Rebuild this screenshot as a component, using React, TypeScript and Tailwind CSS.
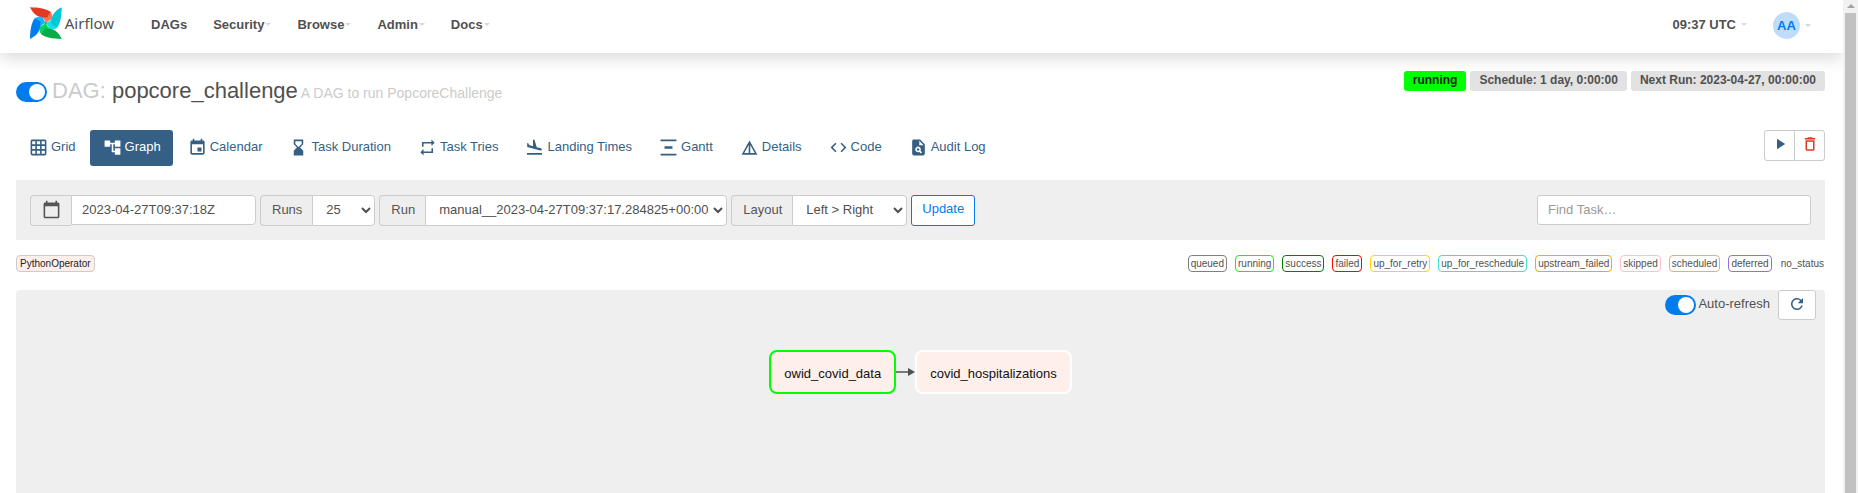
import type { ReactNode } from "react";
import type { IconType } from "react-icons";
import {
  MdAccountTree,
  MdCode,
  MdDeleteOutline,
  MdDetails,
  MdEvent,
  MdFlightLand,
  MdGridOn,
  MdHourglassBottom,
  MdPlagiarism,
  MdPlayArrow,
  MdRefresh,
  MdRepeat,
  MdVerticalDistribute,
} from "react-icons/md";

const menus = ["Security", "Browse", "Admin", "Docs"];

const tabs: { label: string; icon: IconType; active?: boolean }[] = [
  { label: "Grid", icon: MdGridOn },
  { label: "Graph", icon: MdAccountTree, active: true },
  { label: "Calendar", icon: MdEvent },
  { label: "Task Duration", icon: MdHourglassBottom },
  { label: "Task Tries", icon: MdRepeat },
  { label: "Landing Times", icon: MdFlightLand },
  { label: "Gantt", icon: MdVerticalDistribute },
  { label: "Details", icon: MdDetails },
  { label: "Code", icon: MdCode },
  { label: "Audit Log", icon: MdPlagiarism },
];

const states = [
  { name: "queued", style: "border px-[2px] border-[#808080]" },
  { name: "running", style: "border px-[2px] border-[#00ff00]" },
  { name: "success", style: "border px-[2px] border-[#008000]" },
  { name: "failed", style: "border px-[2px] border-[#ff0000]" },
  { name: "up_for_retry", style: "border px-[2px] border-[#ffd700]" },
  { name: "up_for_reschedule", style: "border px-[2px] border-[#40e0d0]" },
  { name: "upstream_failed", style: "border px-[2px] border-[#ffa500]" },
  { name: "skipped", style: "border px-[2px] border-[#ffc0cb]" },
  { name: "scheduled", style: "border px-[2px] border-[#d2b48c]" },
  { name: "deferred", style: "border px-[2px] border-[#9370db]" },
  { name: "no_status", style: "border border-transparent" },
];

const blades = [
  { angle: 0, dark: "#e43921", light: "#ff7557" },
  { angle: 90, dark: "#00c7d4", light: "#11e1ee" },
  { angle: 180, dark: "#00ad46", light: "#04d659" },
  { angle: 270, dark: "#017cee", light: "#0cb6ff" },
];

function Pinwheel() {
  return (
    <svg viewBox="0 0 32 32" className="size-8" aria-hidden="true">
      {blades.map((b) => (
        <g key={b.angle} transform={`rotate(${b.angle} 16 16)`}>
          <path d="M10 9 L20 4 C22.500 6.500 23.200 10 22.300 12 C20.500 13 18 14.500 16 16 C15 13 13.500 11 10 9 Z" fill={b.light} />
          <path d="M0 0 C9 0.200 17.500 1.500 20.500 5 C19.500 7 18.500 8 17.800 10.300 C9.500 11 4 8.500 0 0 Z" fill={b.dark} />
        </g>
      ))}
      <circle cx="16" cy="16" r="0.8" fill="#51504f" />
    </svg>
  );
}

function CalendarIcon() {
  return (
    <svg viewBox="0 0 24 24" className="size-[19px]" fill="currentColor" role="img" aria-label="Base date">
      <path d="M20 3h-1V1h-2v2H7V1H5v2H4c-1.100 0-2 .9-2 2v16c0 1.100.9 2 2 2h16c1.100 0 2-.9 2-2V5c0-1.100-.9-2-2-2zm0 18H4V8h16v13z" />
    </svg>
  );
}

function Caret() {
  return <span className="border-x-3 border-t-3 border-x-transparent border-t-[#e2d2e2]" />;
}

function Toggle({ label }: { label: string }) {
  return (
    <span className="relative inline-flex h-5 w-[31px] shrink-0">
      <input
        type="checkbox"
        role="switch"
        aria-label={label}
        defaultChecked
        className="peer h-5 w-[31px] cursor-pointer appearance-none rounded-full bg-[#9e9e9e] checked:bg-[#017cee]"
      />
      <span className="pointer-events-none absolute top-0.5 left-0.5 size-4 rounded-full bg-white peer-checked:left-[13px]" />
    </span>
  );
}

function Group({ id, label, children }: { id: string; label: ReactNode; children: ReactNode }) {
  return (
    <div className="flex h-[31px]">
      <label
        htmlFor={id}
        className="flex items-center rounded-l border border-r-0 border-[#cccccc] bg-[#eeeeee] pr-2.5 pb-0.5 pl-[11px] text-[#555]"
      >
        {label}
      </label>
      {children}
    </div>
  );
}

const selectStyle = "h-[31px] rounded-r border border-[#cccccc] bg-white pb-0.5 pl-[9px] text-[13px] text-[#51504f]";

export default function App() {
  return (
    <div className="flex min-h-screen bg-white font-['Liberation_Sans',Arial,sans-serif] text-[13px] leading-5 text-[#51504f]">
      <div className="flex min-w-0 flex-1 flex-col">
        <header className="flex h-[53px] items-center pr-8 pl-[30px] font-bold shadow-[0_5px_15px_rgba(0,0,0,0.15)]">
          <a href="#" aria-label="Airflow" className="mr-6 flex w-[84px] items-center gap-[3px] pb-[7px]">
            <Pinwheel />
            <span className="font-['Noto_Sans',sans-serif] text-[15px] font-normal">Airflow</span>
          </a>
          <nav className="flex flex-1 items-center pb-1">
            <a href="#" className="px-[13px]">
              DAGs
            </a>
            {menus.map((m) => (
              <button key={m} type="button" className="flex items-center gap-px px-[13px]">
                {m}
                <Caret />
              </button>
            ))}
          </nav>
          <button type="button" className="mr-[26px] flex items-center gap-[5px] pb-1">
            09:37 UTC
            <Caret />
          </button>
          <button type="button" className="flex items-center gap-[5px] pb-0.5">
            <span className="flex size-[27px] items-center justify-center rounded-full bg-[#bfddfb] text-[#017cee]">
              AA
            </span>
            <Caret />
          </button>
        </header>

        <main className="flex flex-1 flex-col px-4 pr-[18px] pt-[18px]">
          <div className="flex items-start justify-between">
            <div className="flex items-center gap-[5px] pt-1">
              <Toggle label="Pause or unpause DAG" />
              <h3 className="flex items-baseline gap-[3px] pb-0.5 text-[22px] leading-8">
                <span>
                  <span className="text-[#cbcbcb]">DAG:</span> popcore_challenge
                </span>
                <small className="text-sm text-[#cbcbcb]">A DAG to run PopcoreChallenge</small>
              </h3>
            </div>
            <div className="flex gap-1 text-xs leading-[18px] font-bold">
              <a href="#" className="rounded-[3px] bg-[#00ff00] px-[9px] pb-0.5 text-[#222]">
                running
              </a>
              <a href="#" className="rounded-[3px] bg-[#e2e2e2] px-[9px] pb-0.5">
                Schedule: 1 day, 0:00:00
              </a>
              <span className="rounded-[3px] bg-[#e2e2e2] px-[9px] pb-0.5">Next Run: 2023-04-27, 00:00:00</span>
            </div>
          </div>

          <div className="mt-[21px] flex items-start justify-between">
            <nav className="flex gap-0.5">
              {tabs.map(({ label, icon: Icon, active }) => (
                <a
                  key={label}
                  href="#"
                  className={
                    active
                      ? "flex h-9 items-center gap-[3px] rounded-[3px] bg-[#355f84] pr-3 pb-0.5 pl-[13px] text-white"
                      : "flex h-9 items-center gap-[3px] rounded-[3px] pr-3 pb-0.5 pl-[13px] text-[#355f84]"
                  }
                >
                  <Icon className="size-[19px]" />
                  {label}
                </a>
              ))}
            </nav>
            <div className="flex">
              <button
                type="button"
                aria-label="Trigger DAG"
                className="flex h-[31px] w-[31px] items-center justify-center rounded-l-[3px] border border-[#cccccc] pb-1 text-[#355f84]"
              >
                <MdPlayArrow className="size-[18px]" />
              </button>
              <button
                type="button"
                aria-label="Delete DAG"
                className="-ml-px flex h-[31px] w-[31px] items-center justify-center rounded-r-[3px] border border-[#cccccc] pb-1 text-[#e43921]"
              >
                <MdDeleteOutline className="size-[18px]" />
              </button>
            </div>
          </div>

          <form className="mt-3.5 flex h-[60px] items-start justify-between bg-[#efefef] px-3.5 pt-[15px]">
            <div className="flex gap-1">
              <Group id="base-date" label={<CalendarIcon />}>
                <input
                  id="base-date"
                  type="text"
                  defaultValue="2023-04-27T09:37:18Z"
                  className="h-[30px] w-[185px] rounded-r border border-[#cccccc] bg-white px-2.5 pb-0.5"
                />
              </Group>
              <Group id="num-runs" label="Runs">
                <select id="num-runs" className={`${selectStyle} w-[63px]`}>
                  <option>25</option>
                </select>
              </Group>
              <Group id="run" label="Run">
                <select id="run" className={`${selectStyle} w-[302px]`}>
                  <option>manual__2023-04-27T09:37:17.284825+00:00</option>
                </select>
              </Group>
              <Group id="layout" label="Layout">
                <select id="layout" className={`${selectStyle} w-[115px]`}>
                  <option>Left &gt; Right</option>
                </select>
              </Group>
              <button
                type="button"
                className="h-[31px] rounded-[3px] border border-[#017cee] bg-white px-2.5 pb-1 text-[#017cee]"
              >
                Update
              </button>
            </div>
            <input
              type="text"
              aria-label="Find Task"
              placeholder="Find Task…"
              className="h-[30px] w-[274px] rounded-[3px] border border-[#cccccc] bg-white px-2.5 pb-0.5 placeholder:text-[#999]"
            />
          </form>

          <div className="mt-[15px] flex justify-between text-[10px] leading-[15px]">
            <span className="rounded border border-[#cccccc] bg-[#ffefeb] px-[3px] text-[#222]">PythonOperator</span>
            <div className="flex gap-2">
              {states.map((s) => (
                <span key={s.name} className={`rounded ${s.style}`}>
                  {s.name}
                </span>
              ))}
            </div>
          </div>

          <section className="mt-[18px] flex flex-1 flex-col rounded-t bg-[#efefef]">
            <div className="flex items-start justify-end pr-[9px]">
              <label className="flex items-start gap-0.5 pt-[5px]">
                <Toggle label="Auto-refresh" />
                <span className="-mt-px">Auto-refresh</span>
              </label>
              <button
                type="button"
                aria-label="Refresh"
                className="ml-2 flex h-[30px] w-[38px] items-center justify-center rounded-[3px] border border-[#cccccc] bg-white pb-0.5 text-[#355f84]"
              >
                <MdRefresh className="size-[18px]" />
              </button>
            </div>
            <div className="flex items-center justify-center pt-[30px] text-[#111]">
              <div className="flex h-11 items-center rounded-lg border-2 border-[#00ff00] bg-[#ffefeb] px-[13px] pt-[3px]">
                owid_covid_data
              </div>
              <svg viewBox="0 0 19 10" className="h-2.5 w-[19px] overflow-visible" aria-hidden="true">
                <path d="M0 5H14" stroke="#51504f" strokeWidth="1.5" />
                <path d="M12 1L19 5L12 9Z" fill="#51504f" />
              </svg>
              <div className="flex h-11 items-center rounded-lg border-2 border-white bg-[#ffefeb] px-[13px] pt-[3px]">
                covid_hospitalizations
              </div>
            </div>
          </section>
        </main>
      </div>

      <div className="sticky top-0 flex h-screen w-[15px] shrink-0 flex-col items-center bg-[#f1f1f1]" aria-hidden="true">
        <span className="mt-1 border-x-4 border-b-4 border-x-transparent border-b-[#a3a3a3]" />
        <span className="mt-[5px] w-[11px] flex-1 bg-[#c1c1c1]" />
      </div>
    </div>
  );
}
